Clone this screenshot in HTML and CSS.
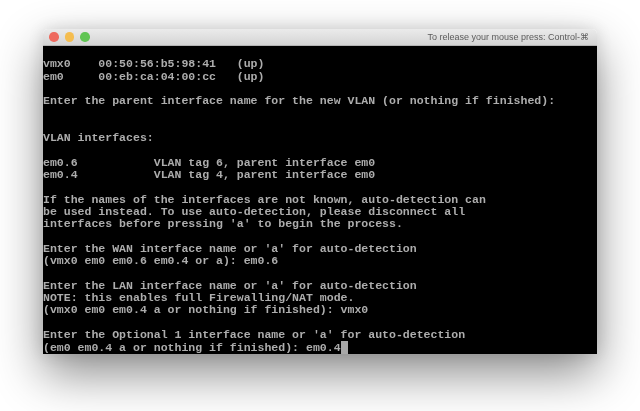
FILE: index.html
```html
<!DOCTYPE html>
<html lang="en">
<head>
<meta charset="utf-8">
<title>Console</title>
<link rel="stylesheet" href="styles.css">
</head>
<body>
<div class="window">
  <div class="titlebar">
    <div class="lights">
      <span class="light red"></span>
      <span class="light yellow"></span>
      <span class="light green"></span>
    </div>
    <span class="hint">To release your mouse press: Control-⌘</span>
  </div>
  <pre class="console">

vmx0    00:50:56:b5:98:41   (up)
em0     00:eb:ca:04:00:cc   (up)

Enter the parent interface name for the new VLAN (or nothing if finished):


VLAN interfaces:

em0.6           VLAN tag 6, parent interface em0
em0.4           VLAN tag 4, parent interface em0

If the names of the interfaces are not known, auto-detection can
be used instead. To use auto-detection, please disconnect all
interfaces before pressing 'a' to begin the process.

Enter the WAN interface name or 'a' for auto-detection
(vmx0 em0 em0.6 em0.4 or a): em0.6

Enter the LAN interface name or 'a' for auto-detection
NOTE: this enables full Firewalling/NAT mode.
(vmx0 em0 em0.4 a or nothing if finished): vmx0

Enter the Optional 1 interface name or 'a' for auto-detection
(em0 em0.4 a or nothing if finished): em0.4<span class="cursor"></span></pre>
</div>
</body>
</html>
```
FILE: styles.css
```css
html, body {
  margin: 0;
  height: 411px;
  background: #fff;
  overflow: hidden;
}
body {
  padding: 29px 43px 0;
  box-sizing: border-box;
}
.window {
  width: 554px;
  height: 325px;
  display: flex;
  flex-direction: column;
  border-radius: 5px 5px 0 0;
  box-shadow: 0 20px 48px rgba(0, 0, 0, 0.45), 0 0 16px rgba(0, 0, 0, 0.12);
  overflow: hidden;
}
.titlebar {
  height: 17px;
  flex: none;
  display: flex;
  align-items: center;
  justify-content: space-between;
  padding: 0 8px 0 6px;
  background: linear-gradient(#ebebeb, #d4d4d4);
  border-bottom: 1px solid #b4b4b4;
  box-sizing: border-box;
}
.lights {
  display: flex;
  gap: 6px;
}
.light {
  width: 9.5px;
  height: 9.5px;
  border-radius: 50%;
}
.red { background: #ee6a5f; }
.yellow { background: #f5bd4f; }
.green { background: #61c554; }
.hint {
  font: 9px "Liberation Sans", "DejaVu Sans", sans-serif;
  color: #5c5c5c;
  filter: blur(0.25px);
}
.console {
  flex: 1;
  margin: 0;
  background: #000;
  color: #adadad;
  font: bold 11.54px/12.3px "Liberation Mono", monospace;
  filter: blur(0.4px);
  overflow: hidden;
}
.cursor {
  display: inline-block;
  width: 7px;
  height: 13px;
  background: #a8a8a8;
  vertical-align: -3px;
}
```
